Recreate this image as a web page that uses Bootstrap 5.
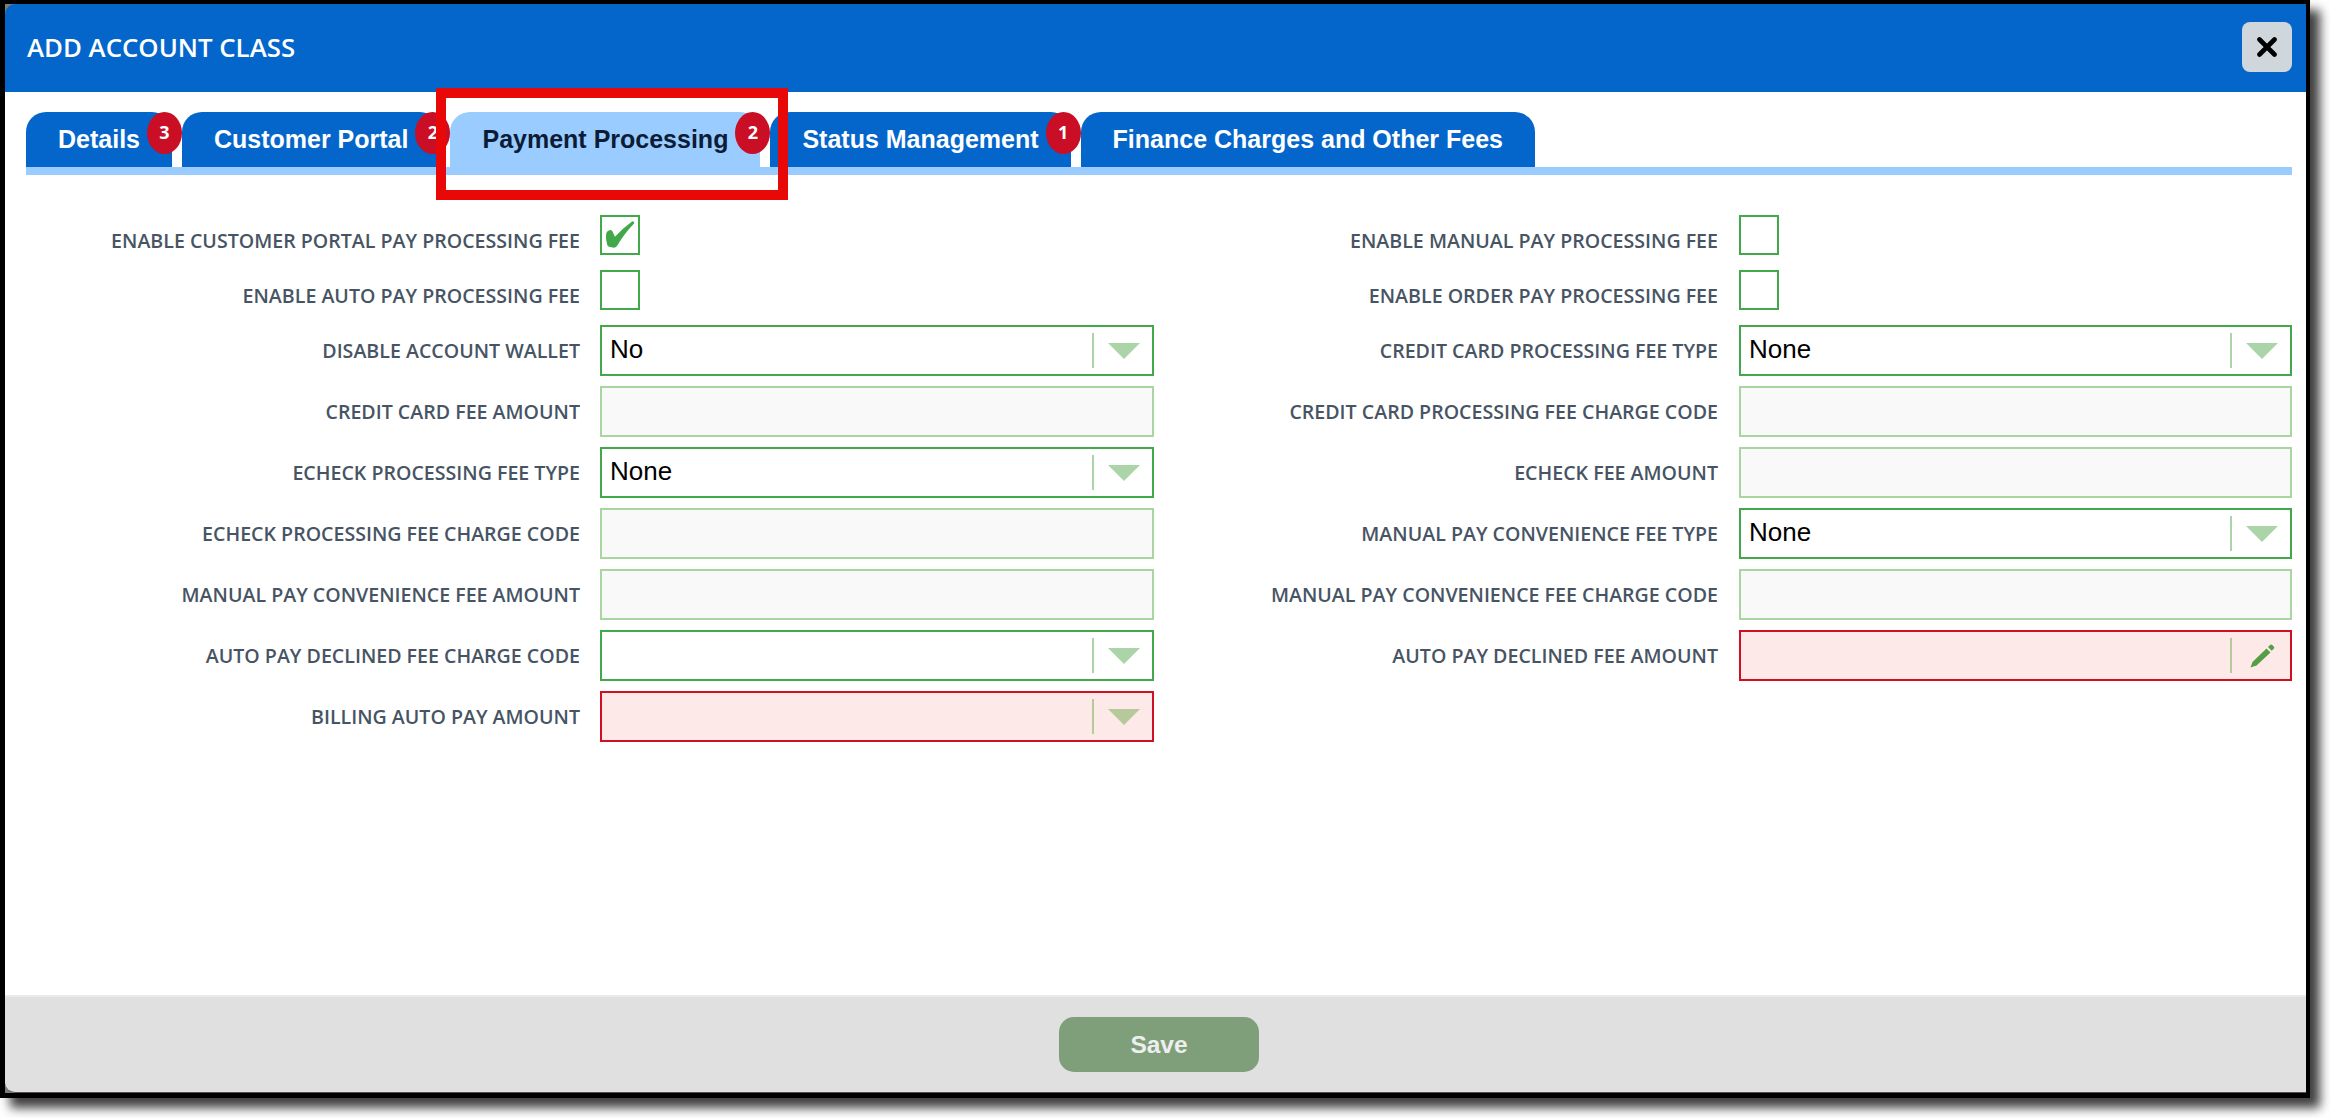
<!DOCTYPE html>
<html lang="en">
<head>
<meta charset="utf-8">
<title>Add Account Class</title>
<link rel="stylesheet" href="https://cdn.jsdelivr.net/npm/bootstrap@5.3.0/dist/css/bootstrap.min.css">
<style>
html, body { background: #fff; height: 100%; margin: 0; overflow: hidden; }
.shot-frame { width: 2310px; height: 1098px; border: solid #000; border-width: 4px 4px 5px 5px; box-shadow: 10px 10px 10px rgba(0,0,0,.75); display: flex; flex-direction: column; background: #7d7d7d; }
.dlg-head { height: 88px; background: #0466cb; padding: 0 14px 2px 22px; border-top-left-radius: 10px; flex: none; }
.dlg-title { font: 600 25.8px "Open Sans", sans-serif; color: #fff; margin: 0; }
.dlg-close { width: 50px; height: 50px; background: #cfd6dc; border: 0; border-radius: 8px; padding: 0; }
.dlg-body { flex: 1; padding: 20px 14px 0 9px; min-height: 0; background: #fff; }
.tab-strip { margin-left: 12px; border-bottom: 8px solid #9accff; height: 63px; }
.tab-item { height: 55px; background: #0466cb; color: #fff; font: 700 25px/55px "Liberation Sans", sans-serif; border-radius: 20px 20px 0 0; margin-right: 10px; padding: 0 32px; position: relative; white-space: nowrap; }
.tab-item.active-item { background: #9accff; color: #0c1c36; height: 63px; }
.tab-count { position: absolute; top: 0; right: -10px; z-index: 2; width: 35px; height: 42px; border-radius: 50%; background: #c90e25; color: #fff; font: 700 18px/40px "Open Sans", sans-serif; text-align: center; }
.mark-box { position: absolute; left: 431px; top: 84px; width: 352px; height: 112px; border: 10px solid #e90808; pointer-events: none; z-index: 3; }
.field-grid { display: grid; grid-template-columns: 1140px 1138px; row-gap: 10px; margin-top: 40px; }
.field-row { display: flex; align-items: center; height: 51px; }
.field-row.check-row { height: 45px; align-items: flex-start; }
.field-label { flex: none; width: 566px; margin: 0 20px 0 0; text-align: right; font: 600 19.6px "Open Sans", sans-serif; color: #475464; text-transform: uppercase; white-space: nowrap; }
.field-row:nth-child(even) .field-label { width: 564px; margin-right: 21px; }
.check-row .field-label { margin-top: 12px; }
.check-face { width: 40px; height: 40px; border: 2px solid #43a84a; background: #fff; display: block; }
.field-box { flex: 1; height: 51px; border: 2px solid #43a84a; background: #fff; display: flex; align-items: center; font: 400 26px "Liberation Sans", sans-serif; color: #000; padding: 0 12px 3px 8px; }
.field-box > * { margin-top: 3px; }
.field-box > .field-val { margin-top: 0; flex: 1; }
.field-box.readonly-box { background: #f9f9f9; border-color: #a8d5a0; }
.field-box.error-box { background: #fce9e8; border-color: #cf0f22; }
.field-sep { width: 2px; height: 35px; background: #abd5a8; margin-right: 14px; flex: none; }
.error-box .field-sep { background: #b5c99a; }
.field-box > .sep-wide { margin-right: 18px; }
.pencil-icon { margin-right: 3px; }
.dlg-foot { height: 98px; flex: none; background: #e0e0e0; border-top: 2px solid #e8ebee; border-bottom: 1px solid #5c4d4d; border-bottom-left-radius: 10px; padding-left: 7px; }
.save-btn { width: 200px; height: 55px; background: #7f9f7b; border: 0; border-radius: 15px; color: #eee; font: 700 24.5px "Liberation Sans", sans-serif; }
</style>
</head>
<body>
<div class="shot-frame position-relative">
  <div class="dlg-head d-flex align-items-center justify-content-between">
    <h5 class="dlg-title">ADD ACCOUNT CLASS</h5>
    <button class="dlg-close d-flex align-items-center justify-content-center" type="button" aria-label="Close">
      <svg width="20" height="20" viewBox="0 0 20 20"><path d="M2.5 2.5 17.5 17.5M17.5 2.5 2.5 17.5" stroke="#000" stroke-width="4.6" stroke-linecap="round"/></svg>
    </button>
  </div>
  <div class="dlg-body">
    <div class="tab-strip d-flex">
      <div class="tab-item">Details<span class="tab-count">3</span></div>
      <div class="tab-item">Customer Portal<span class="tab-count">2</span></div>
      <div class="tab-item active-item">Payment Processing<span class="tab-count">2</span></div>
      <div class="tab-item">Status Management<span class="tab-count">1</span></div>
      <div class="tab-item">Finance Charges and Other Fees</div>
    </div>
    <div class="field-grid">
      <div class="field-row check-row"><label class="field-label">Enable Customer Portal Pay Processing Fee</label>
        <div class="check-face"><svg width="36" height="36" viewBox="0 0 36 36"><path d="M4.700 15Q8 12 10 13.500L13 19.700Q21 11 29.700 4.700Q32 3.500 32.300 6.300Q22 17 15 29Q13 31.500 9.700 30.300Q6 30 5.300 28Q3 20 4.700 15z" fill="#43a84a"/></svg></div></div>
      <div class="field-row check-row"><label class="field-label">Enable Manual Pay Processing Fee</label><div class="check-face"></div></div>

      <div class="field-row check-row"><label class="field-label">Enable Auto Pay Processing Fee</label><div class="check-face"></div></div>
      <div class="field-row check-row"><label class="field-label">Enable Order Pay Processing Fee</label><div class="check-face"></div></div>

      <div class="field-row"><label class="field-label">Disable Account Wallet</label>
        <div class="field-box"><span class="field-val">No</span><span class="field-sep"></span><svg width="32" height="16" viewBox="0 0 32 16"><path d="M0 0h32L16 16z" fill="#abd5a8"/></svg></div></div>
      <div class="field-row"><label class="field-label">Credit Card Processing Fee Type</label>
        <div class="field-box"><span class="field-val">None</span><span class="field-sep"></span><svg width="32" height="16" viewBox="0 0 32 16"><path d="M0 0h32L16 16z" fill="#abd5a8"/></svg></div></div>

      <div class="field-row"><label class="field-label">Credit Card Fee Amount</label><div class="field-box readonly-box"></div></div>
      <div class="field-row"><label class="field-label">Credit Card Processing Fee Charge Code</label><div class="field-box readonly-box"></div></div>

      <div class="field-row"><label class="field-label">Echeck Processing Fee Type</label>
        <div class="field-box"><span class="field-val">None</span><span class="field-sep"></span><svg width="32" height="16" viewBox="0 0 32 16"><path d="M0 0h32L16 16z" fill="#abd5a8"/></svg></div></div>
      <div class="field-row"><label class="field-label">Echeck Fee Amount</label><div class="field-box readonly-box"></div></div>

      <div class="field-row"><label class="field-label">Echeck Processing Fee Charge Code</label><div class="field-box readonly-box"></div></div>
      <div class="field-row"><label class="field-label">Manual Pay Convenience Fee Type</label>
        <div class="field-box"><span class="field-val">None</span><span class="field-sep"></span><svg width="32" height="16" viewBox="0 0 32 16"><path d="M0 0h32L16 16z" fill="#abd5a8"/></svg></div></div>

      <div class="field-row"><label class="field-label">Manual Pay Convenience Fee Amount</label><div class="field-box readonly-box"></div></div>
      <div class="field-row"><label class="field-label">Manual Pay Convenience Fee Charge Code</label><div class="field-box readonly-box"></div></div>

      <div class="field-row"><label class="field-label">Auto Pay Declined Fee Charge Code</label>
        <div class="field-box"><span class="field-val"></span><span class="field-sep"></span><svg width="32" height="16" viewBox="0 0 32 16"><path d="M0 0h32L16 16z" fill="#abd5a8"/></svg></div></div>
      <div class="field-row"><label class="field-label">Auto Pay Declined Fee Amount</label>
        <div class="field-box error-box"><span class="field-val"></span><span class="field-sep sep-wide"></span><svg class="pencil-icon" width="25" height="25" viewBox="0 0 25 25"><path d="M0.500 24.500L2.500 19L16.500 5.500L20.500 9.500L6.500 22.500zM18 4l2-2c.7-.7 1.500-.7 2.200 0l1.500 1.500c.7.7.7 1.500 0 2.200l-2 2z" fill="#559e43"/></svg></div></div>

      <div class="field-row"><label class="field-label">Billing Auto Pay Amount</label>
        <div class="field-box error-box"><span class="field-val"></span><span class="field-sep"></span><svg width="32" height="16" viewBox="0 0 32 16"><path d="M0 0h32L16 16z" fill="#b5c99a"/></svg></div></div>
    </div>
  </div>
  <div class="dlg-foot d-flex align-items-center justify-content-center">
    <button class="save-btn" type="button">Save</button>
  </div>
  <div class="mark-box"></div>
</div>
</body>
</html>
